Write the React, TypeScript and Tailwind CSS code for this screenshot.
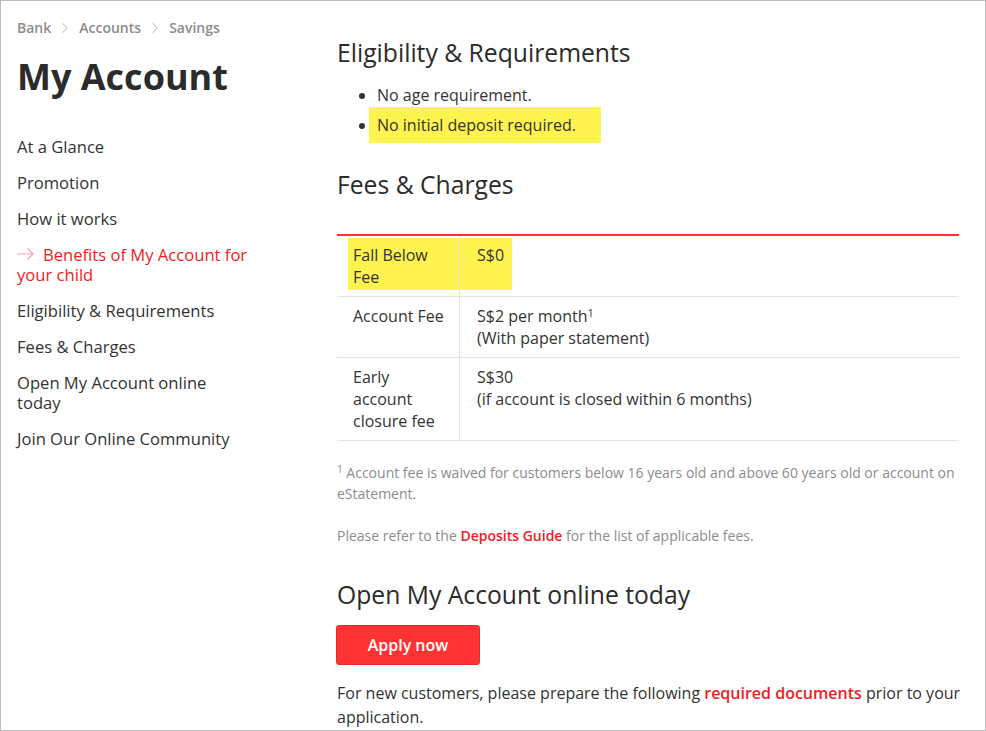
import { ChevronRight } from 'lucide-react';

const navItems = [
  'At a Glance',
  'Promotion',
  'How it works',
  'Benefits of My Account for your child',
  'Eligibility & Requirements',
  'Fees & Charges',
  'Open My Account online today',
  'Join Our Online Community',
];

function ArrowRight() {
  return (
    <svg width="17" height="12" viewBox="0 0 17 12" className="inline-block mr-[9px] align-[1px]">
      <path d="M0 6h16M10.5 0.5L16 6l-5.5 5.5" fill="none" stroke="#f7a1a5" strokeWidth="1.2" />
    </svg>
  );
}

function Sidebar() {
  return (
    <aside className="w-[336px] shrink-0 pl-4 pt-[17px]">
      <nav className="flex items-center gap-[5px] text-sm leading-5 font-semibold text-[#8c8c8c]">
        <span>Bank</span>
        <ChevronRight size={18} strokeWidth={1.1} className="text-[#a6a6a6]" />
        <span>Accounts</span>
        <ChevronRight size={18} strokeWidth={1.1} className="text-[#a6a6a6]" />
        <span>Savings</span>
      </nav>
      <h1 className="mt-4 text-[36px] leading-[46px] font-bold text-[#2b2b2b]">My Account</h1>
      <ul className="mt-[37px] w-[234px] flex flex-col gap-4 text-[16.6px] leading-5 text-[#333333]">
        {navItems.map((item, i) =>
          i === 3 ? (
            <li key={item} className="text-[#ee1c25]">
              <ArrowRight />
              {item}
            </li>
          ) : (
            <li key={item}>{item}</li>
          )
        )}
      </ul>
    </aside>
  );
}

function FeeTable() {
  return (
    <div className="mt-[33px] w-[622px] border-t-2 border-[#ff3333] text-base leading-[22px] text-[#333333]">
      <div className="grid grid-cols-[122px_1fr] border-b border-[#e3e3e3]">
        <div className="pl-[11px] pt-[2px] pb-[6px]">
          <div className="bg-[#fff44f] pl-[5px] pr-[14px] pt-[6px] pb-[2px]">Fall Below Fee</div>
        </div>
        <div className="border-l border-[#e3e3e3] pt-[2px] pb-[6px]">
          <div className="w-fit bg-[#fff44f] pl-[17px] pr-2 pt-[6px] pb-[2px] h-full">S$0</div>
        </div>
      </div>
      <div className="grid grid-cols-[122px_1fr] border-b border-[#e3e3e3]">
        <div className="pl-4 pr-[14px] py-2">Account Fee</div>
        <div className="border-l border-[#e3e3e3] pl-[17px] py-2">
          S$2 per month<sup className="text-[11px] leading-none">1</sup>
          <br />
          (With paper statement)
        </div>
      </div>
      <div className="grid grid-cols-[122px_1fr] border-b border-[#e3e3e3]">
        <div className="pl-4 pr-[14px] py-2">Early account closure fee</div>
        <div className="border-l border-[#e3e3e3] pl-[17px] py-2">
          S$30
          <br />
          (if account is closed within 6 months)
        </div>
      </div>
    </div>
  );
}

export default function App() {
  return (
    <div
      className="w-[986px] h-[731px] overflow-hidden border border-[#bdbdbd] bg-white flex"
      style={{ fontFamily: '"Open Sans", "Noto Sans", sans-serif' }}
    >
      <Sidebar />
      <main className="w-[626px] pt-9 text-[#333333]">
        <h2 className="text-[24.7px] leading-8 text-[#2b2b2b]">Eligibility &amp; Requirements</h2>
        <ul className="mt-[14px] list-disc pl-10 text-base leading-6">
          <li>No age requirement.</li>
          <li>
            <span className="inline-block -ml-2 bg-[#fff44f] pl-2 pr-[25px] py-[6px]">No initial deposit required.</span>
          </li>
        </ul>

        <h2 className="mt-[26px] text-[24.7px] leading-8 text-[#2b2b2b]">Fees &amp; Charges</h2>
        <FeeTable />

        <p className="mt-[21px] w-[622px] text-sm leading-[21px] text-[#8c8c8c]">
          <sup className="text-[10px] leading-none">1</sup> Account fee is waived for customers below 16 years old
          and above 60 years old or account on eStatement.
        </p>
        <p className="mt-[21px] text-sm leading-[21px] text-[#8c8c8c]">
          Please refer to the <a className="font-semibold text-[#ee1c25]">Deposits Guide</a> for the list of
          applicable fees.
        </p>

        <h2 className="mt-[33px] text-[24.7px] leading-8 text-[#2b2b2b]">Open My Account online today</h2>
        <button className="mt-[14px] -ml-px w-[144px] h-10 rounded-[3px] border border-[#e52b2b] bg-[#ff3333] text-base font-semibold text-white">
          Apply now
        </button>
        <p className="mt-4 text-base leading-6">
          For new customers, please prepare the following{' '}
          <a className="font-semibold text-[#ee1c25]">required documents</a> prior to your application.
        </p>
      </main>
    </div>
  );
}
